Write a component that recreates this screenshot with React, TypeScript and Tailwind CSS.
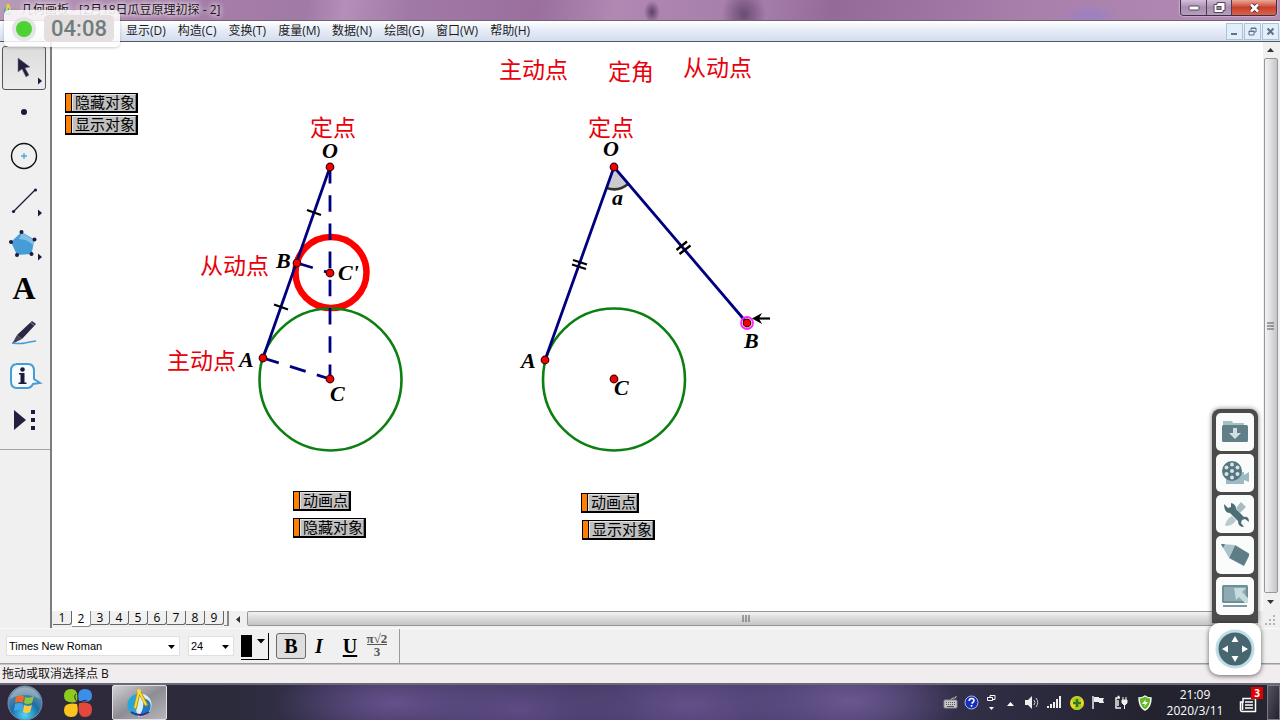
import { useState } from "react"
import { clsx } from "clsx"

const menus = ["显示(D)", "构造(C)", "变换(T)", "度量(M)", "数据(N)", "绘图(G)", "窗口(W)", "帮助(H)"]

const pages = [1, 2, 3, 4, 5, 6, 7, 8, 9]

const redLabels = [
    { text: "主动点", x: 499, y: 78 },
    { text: "定角", x: 608, y: 80 },
    { text: "从动点", x: 683, y: 76 },
    { text: "定点", x: 310, y: 136 },
    { text: "定点", x: 588, y: 136 },
    { text: "从动点", x: 200, y: 274 },
    { text: "主动点", x: 167, y: 369 },
]

const pointLabels = [
    { text: "O", x: 322, y: 158 },
    { text: "B", x: 276, y: 268 },
    { text: "C'", x: 338, y: 280 },
    { text: "A", x: 239, y: 367 },
    { text: "C", x: 330, y: 401 },
    { text: "O", x: 603, y: 156 },
    { text: "a", x: 612, y: 205 },
    { text: "A", x: 521, y: 368 },
    { text: "C", x: 614, y: 395 },
    { text: "B", x: 744, y: 348 },
]

const points = [
    [330, 167],
    [297, 263],
    [330, 273],
    [263, 358],
    [330, 379],
    [614, 167],
    [545, 360],
    [614, 379],
    [747, 323],
]

function WindowControls() {
    return (
        <div className="mr-[3px] flex h-4 overflow-hidden rounded-b-[4px] border border-t-0 border-[#3d2f45] shadow-[0_0_2px_#fff]">
            <button aria-label="最小化" className="flex w-[26px] items-center justify-center border-r border-[#4d3d55] bg-linear-to-b from-[#d3bfd6] via-[#a98db1] via-50% to-[#b79fbd]">
                <svg width="12" height="6" viewBox="0 0 12 6"><rect x="1" y="1" width="10" height="4" rx="1" fill="#fff" stroke="#54465c" /></svg>
            </button>
            <button aria-label="还原" className="flex w-[25px] items-center justify-center border-r border-[#4d3d55] bg-linear-to-b from-[#d3bfd6] via-[#a98db1] via-50% to-[#b79fbd]">
                <svg width="13" height="13" viewBox="0 0 13 13">
                    <path d="M4 1.500h8v8h-2v2h-9v-8h3z" fill="#fff" stroke="#54465c" />
                    <rect x="4" y="5.500" width="4" height="3" fill="#a98db1" stroke="#54465c" />
                </svg>
            </button>
            <button aria-label="关闭" className="flex w-[44px] items-center justify-center bg-linear-to-b from-[#e9a798] via-[#c8402c] via-50% to-[#d9634a]">
                <svg width="13" height="12" viewBox="0 0 13 12">
                    <path d="M3 2.500l7 7M10 2.500l-7 7" stroke="#5b2b2b" strokeWidth="4.500" />
                    <path d="M3 2.500l7 7M10 2.500l-7 7" stroke="#fff" strokeWidth="2.600" />
                </svg>
            </button>
        </div>
    )
}

function TitleBar() {
    return (
        <div className="flex h-5 shrink-0 items-start justify-between overflow-hidden bg-[radial-gradient(ellipse_10px_14px_at_652px_12px,#5d4166,transparent_80%),radial-gradient(ellipse_26px_30px_at_744px_14px,#694b73,transparent_85%),radial-gradient(ellipse_30px_12px_at_1090px_16px,#9a80c4,transparent),linear-gradient(100deg,#b79ab8_0%,#a57da8_16%,#a27aa6_24%,#b48fb8_27%,#a179a6_32%,#9a6f9e_42%,#b088b2_48%,#a47ca9_60%,#936a98_65%,#a87fab_80%,#b48cb5_100%)]">
            <div className="flex h-5 items-center gap-2 pl-1">
                <svg width="9" height="14" viewBox="0 0 9 14">
                    <circle cx="4" cy="8" r="4" fill="#3c9fd4" />
                    <path d="M4 1l4 10M4 1L2 10" stroke="#e8d23a" strokeWidth="2" fill="none" />
                    <path d="M1 10q3 3 7 0" stroke="#1d4b7d" fill="none" />
                </svg>
                <span className="text-[12px] leading-4 whitespace-nowrap text-[#1c1420] [text-shadow:0_0_6px_#fff,0_0_4px_#fff]">几何画板 - [2月18日瓜豆原理初探 - 2]</span>
            </div>
            <WindowControls />
        </div>
    )
}

function MenuBar() {
    return (
        <nav className="flex h-[22px] shrink-0 items-center border-t border-b border-t-[#6f6273] border-b-[#55585f] bg-linear-to-b from-white via-[#e9eef8] via-40% to-[#d3ddee] pl-[126px]">
            <div className="flex flex-1 gap-3">
                {menus.map((m) => (
                    <button key={m} className="text-[12px] leading-4 whitespace-nowrap text-[#1b1b1b]">{m}</button>
                ))}
            </div>
            <div className="flex gap-px pr-px">
                <button aria-label="最小化文档" className="flex size-[17px] items-center justify-center border border-[#a9c3dc] bg-[#e3eefb]">
                    <svg width="9" height="9" viewBox="0 0 9 9"><path d="M1 7h6" stroke="#5e7388" strokeWidth="2" /></svg>
                </button>
                <button aria-label="还原文档" className="flex size-[17px] items-center justify-center border border-[#a9c3dc] bg-[#e3eefb]">
                    <svg width="9" height="9" viewBox="0 0 9 9" fill="none" stroke="#5e7388">
                        <path d="M3 3V1h5v4H6M3 1.500h5" />
                        <path d="M1 4h5v4H1zM1 4.500h5" />
                    </svg>
                </button>
                <button aria-label="关闭文档" className="flex size-[17px] items-center justify-center border border-[#a9c3dc] bg-[#e3eefb]">
                    <svg width="9" height="9" viewBox="0 0 9 9"><path d="M1.500 1.500l6 6M7.500 1.500l-6 6" stroke="#5e7388" strokeWidth="2" /></svg>
                </button>
            </div>
        </nav>
    )
}

// every tool is drawn on a 44x44 field, the small triangle marks a fly-out
const tools = [
    {
        name: "移动箭头工具",
        flyout: true,
        icon: <path d="M15 11v14l4-3 4 8 3-2-4-7 5-1z" fill="#231f3e" stroke="#77758a" strokeWidth="0.500" />,
    },
    { name: "点工具", flyout: false, icon: <circle cx="21" cy="21" r="3" fill="#1d1a3b" /> },
    {
        name: "圆工具",
        flyout: false,
        icon: (
            <>
                <circle cx="21" cy="21" r="12.500" fill="none" stroke="#111" strokeWidth="1.400" />
                <path d="M18 21h6M21 18v6" stroke="#4ea6d8" strokeWidth="1.300" />
            </>
        ),
    },
    {
        name: "线段直尺工具",
        flyout: true,
        icon: (
            <>
                <path d="M10 33L32 11" stroke="#1d1a3b" strokeWidth="1.300" />
                <circle cx="10.500" cy="32.500" r="1.600" fill="#1d1a3b" />
                <circle cx="32.500" cy="11" r="1.600" fill="#1d1a3b" />
            </>
        ),
    },
    {
        name: "多边形工具",
        flyout: true,
        icon: (
            <>
                <path d="M18.500 9l13 7.500-3 14.500-14.500 1L8 19z" fill="#469dd6" />
                <path d="M19 10l12 7-1 5q-6-6-14-6z" fill="#a9d5f0" opacity="0.600" />
                {[[18.5, 9], [31.5, 16.5], [28.500, 31], [14, 32], [8, 19]].map(([x, y]) => (
                    <circle key={x} cx={x} cy={y} r="2" fill="#1d1a3b" />
                ))}
            </>
        ),
    },
    { name: "文本工具", flyout: false, icon: null },
    {
        name: "标记工具",
        flyout: false,
        icon: (
            <>
                <path d="M29 10l4 3-14 15-5-4z" fill="#2b2744" />
                <path d="M14 24l5 4-10 5z" fill="#444158" />
                <path d="M27 11l5 4" stroke="#9a98ab" />
                <path d="M9 32q9 1 13 0t11-2" stroke="#469dd6" strokeWidth="1.400" fill="none" />
            </>
        ),
    },
    {
        name: "信息工具",
        flyout: false,
        icon: (
            <>
                <path d="M13 9h12q6 0 6 7v8l6 4-7 1q-2 4-6 4H14q-6 0-6-7V16q0-7 6-7z" fill="#f7fbfe" stroke="#469dd6" strokeWidth="2" />
                <circle cx="19.500" cy="14.500" r="2.300" fill="#1d1a3b" />
                <path d="M16 18h5.500v9.500h2V29h-8v-1.500h2v-8H16z" fill="#1d1a3b" />
            </>
        ),
    },
    {
        name: "自定义工具",
        flyout: false,
        icon: (
            <>
                <path d="M11 11l12 10-12 10z" fill="#231f3e" />
                <path d="M28 11h4v4h-4zM28 19h4v4h-4zM28 27h4v4h-4z" fill="#1d1a3b" />
            </>
        ),
    },
]

function ToolBox() {
    const [active, setActive] = useState(0)
    return (
        <aside className="flex w-[52px] shrink-0 flex-col border-r-2 border-[#7d7d7d] bg-[#f0f0f0]">
            <div className="flex flex-col border-b border-[#a6a6a6] pt-1 pb-[7px] pl-0.5">
                {tools.map((tool, i) => (
                    <button
                        key={tool.name}
                        aria-label={tool.name}
                        onClick={() => setActive(i)}
                        className={clsx(
                            "flex h-11 w-11 items-start rounded-[3px] border",
                            i === active ? "border-[#555] bg-linear-to-b from-[#dcdcdc] to-[#ececec]" : "border-transparent"
                        )}
                    >
                        {tool.icon ? (
                            <svg width="42" height="42" viewBox="0 0 42 42">
                                {tool.icon}
                                {tool.flyout && <path d="M35 30.500l4 3.500-4 3.500z" fill="#1d1a3b" />}
                            </svg>
                        ) : (
                            <span className="w-[42px] text-center font-['Liberation_Serif',serif] text-[32px] leading-[42px] font-bold text-black">A</span>
                        )}
                    </button>
                ))}
            </div>
        </aside>
    )
}

function ActionButton({ label, className }: { label: string; className: string }) {
    return (
        <button className={clsx("absolute flex h-5 border border-r-2 border-b-2 border-black bg-[#c0c0c0] text-[15px] leading-4 whitespace-nowrap text-black", className)}>
            <span className="h-full w-[6px] border-r border-black bg-[#ff8000]" />
            <span className="h-full border-t border-l border-r border-t-[#e4e4e4] border-r-[#808080] border-l-[#e4e4e4] pl-[2px] leading-[15px]">{label}</span>
        </button>
    )
}

function Sketch() {
    return (
        <div className="relative min-w-0 flex-1 overflow-hidden bg-white">
            <svg className="absolute inset-0 h-full w-full">
                <g transform="translate(-52 -42)" fill="none">
                    <circle cx="331" cy="272.500" r="35.500" stroke="#ff0000" strokeWidth="6.500" />
                    <circle cx="330.500" cy="379.500" r="71" stroke="#0b7f10" strokeWidth="2.600" />
                    <circle cx="614" cy="379.500" r="71" stroke="#0b7f10" strokeWidth="2.600" />

                    <g stroke="#00007f" strokeWidth="2.800">
                        <path d="M330 167V379M263 358L330 379M297 263L330 273" strokeDasharray="16.500 11.700" />
                        <path d="M330 167L263 358" />
                    </g>

                    {/* angle mark at O */}
                    <path d="M614 167L606.600 188A22 22 0 0 0 628.300 183.700Z" fill="#cbcbd0" />
                    <path d="M606.600 188A22 22 0 0 0 628.300 183.700" stroke="#333" strokeWidth="2.500" />
                    <path d="M545 360L614 167L747 323" stroke="#00007f" strokeWidth="2.800" />

                    {/* equal length ticks */}
                    <path d="M307 210l14 5M274 304.500l14 5M573 260l14 4.500M572 264.500l14 4.500M676.500 250l10.500-8.500M679.500 254l11-8.500" stroke="#000" strokeWidth="2.300" />

                    <circle cx="747" cy="323" r="6" stroke="#ff22ff" strokeWidth="1.800" />
                    {points.map(([x, y]) => (
                        <circle key={`${x}-${y}`} cx={x} cy={y} r="3.800" fill="#f00000" stroke="#400000" strokeWidth="1.200" />
                    ))}
                    <path d="M755 318.500h15" stroke="#000" strokeWidth="2.200" />
                    <path d="M752 318.500l10-5.500-3 5.500 3 5.500z" fill="#000" />

                    <g fill="#e8000b" fontSize="23" fontFamily="'Noto Sans CJK SC', sans-serif">
                        {redLabels.map((l) => (
                            <text key={`${l.x}-${l.y}`} x={l.x} y={l.y}>{l.text}</text>
                        ))}
                    </g>
                    <g fill="#000" fontSize="22" fontWeight="700" fontStyle="italic" fontFamily="'Liberation Serif', serif">
                        {pointLabels.map((l) => (
                            <text key={`${l.x}-${l.y}`} x={l.x} y={l.y}>{l.text}</text>
                        ))}
                    </g>
                </g>
            </svg>
            <ActionButton label="隐藏对象" className="top-[51px] left-[13px]" />
            <ActionButton label="显示对象" className="top-[73px] left-[13px]" />
            <ActionButton label="动画点" className="top-[449px] left-[241px]" />
            <ActionButton label="隐藏对象" className="top-[476px] left-[241px]" />
            <ActionButton label="动画点" className="top-[451px] left-[529px]" />
            <ActionButton label="显示对象" className="top-[478px] left-[530px]" />
        </div>
    )
}

function VerticalScroll() {
    return (
        <div className="flex w-[17px] shrink-0 flex-col items-center bg-[#f0f0f0] pr-0.5">
            <button aria-label="向上滚动" className="flex h-4 w-full items-center justify-center">
                <svg width="7" height="4" viewBox="0 0 7 4"><path d="M0 4l3.500-4L7 4z" fill="#333" /></svg>
            </button>
            <div className="flex w-[14px] flex-1 items-center justify-center rounded-[2px] border border-[#979797] bg-linear-to-r from-[#f3f3f3] via-[#dedee0] to-[#c4c5c9]">
                <svg width="7" height="8" viewBox="0 0 7 8"><path d="M0 1h7M0 4h7M0 7h7" stroke="#555" /></svg>
            </div>
            <button aria-label="向下滚动" className="flex h-[18px] w-full items-center justify-center">
                <svg width="7" height="4" viewBox="0 0 7 4"><path d="M0 0l3.500 4L7 0z" fill="#333" /></svg>
            </button>
        </div>
    )
}

function PageTabs() {
    const [page, setPage] = useState(2)
    return (
        <div className="flex h-[17px] shrink-0 items-start bg-[#f0f0f0]">
            <div className="flex h-full pl-px">
                {pages.map((p) => (
                    <button
                        key={p}
                        onClick={() => setPage(p)}
                        className={clsx(
                            "w-[19px] rounded-br-[3px] border-r border-b text-center text-[12px] text-black",
                            p === page ? "h-4 border-[#8c8c8c] bg-white leading-4" : "h-[14px] border-[#666] leading-[14px]"
                        )}
                    >
                        {p}
                    </button>
                ))}
                <span className="h-[15px] w-[5px] border-r-2 border-b border-[#888]" />
            </div>
            <button aria-label="向左滚动" className="flex h-full w-[18px] items-center justify-center">
                <svg width="4" height="7" viewBox="0 0 4 7"><path d="M4 0L0 3.500 4 7z" fill="#333" /></svg>
            </button>
            <div className="flex h-[15px] flex-1 items-center justify-center rounded-[2px] border border-[#979797] bg-linear-to-b from-[#f3f3f3] via-[#dadadb] to-[#c4c5c9]">
                <svg width="8" height="7" viewBox="0 0 8 7"><path d="M1 0v7M4 0v7M7 0v7" stroke="#555" /></svg>
            </div>
            <button aria-label="向右滚动" className="flex h-full w-4 items-center justify-center">
                <svg width="4" height="7" viewBox="0 0 4 7"><path d="M0 0l4 3.500L0 7z" fill="#333" /></svg>
            </button>
            <svg className="mt-1 mr-1 ml-1" width="12" height="12" viewBox="0 0 12 12">
                <path d="M9 1h2M9 5h2M5 5h2M9 9h2M5 9h2M1 9h2" stroke="#b5b5b5" strokeWidth="2" />
            </svg>
        </div>
    )
}

function Combo({ label, value, className }: { label: string; value: string; className: string }) {
    return (
        <label aria-label={label} className={clsx("relative flex h-5 border border-[#e0e0e0] bg-white", className)}>
            <select aria-label={label} defaultValue={value} className="h-full w-full appearance-none pl-[2px] font-['Liberation_Sans',sans-serif] text-[11px] leading-[18px] text-black">
                <option>{value}</option>
            </select>
            <svg className="pointer-events-none absolute top-2 right-1" width="7" height="4" viewBox="0 0 7 4"><path d="M0 0l3.500 4L7 0z" fill="#000" /></svg>
        </label>
    )
}

function TextToolbar() {
    return (
        <div className="flex h-9 shrink-0 items-center border-t border-b border-t-[#fafafa] border-b-[#9c9c9c] bg-[#f0f0f0] pl-[6px]">
            <Combo label="字体" value="Times New Roman" className="w-[174px]" />
            <Combo label="字号" value="24" className="ml-2 w-[46px]" />
            <button aria-label="颜色" className="ml-[7px] flex h-[27px] w-7 border-r border-b border-black">
                <span className="mt-0.5 h-[22px] w-[11px] bg-black" />
                <svg className="mt-1.5 ml-[5px]" width="8" height="5" viewBox="0 0 8 5"><path d="M0 0l4 4.500L8 0z" fill="#000" /></svg>
            </button>
            <button aria-pressed className="ml-[7px] h-[26px] w-[30px] rounded-[3px] border border-[#6a6a6a] bg-[#dedede] font-['Liberation_Serif',serif] text-[20px] leading-6 font-bold text-black">B</button>
            <button className="w-[26px] font-['Liberation_Serif',serif] text-[20px] leading-6 font-bold text-black italic">I</button>
            <button className="ml-[5px] w-[26px] font-['Liberation_Serif',serif] text-[20px] leading-6 font-bold text-black underline underline-offset-2">U</button>
            <button aria-label="数学符号" className="ml-px flex h-[27px] w-[26px] flex-col items-center font-['Liberation_Serif',serif] text-[13px] font-bold text-[#555]">
                <span className="h-3 border-b border-[#555] leading-3">π√2</span>
                <span className="leading-[13px]">3</span>
            </button>
            <span className="ml-[9px] h-full border-l border-[#9a9a9a]" />
        </div>
    )
}

function StatusBar() {
    return (
        <div className="flex h-[19px] shrink-0 items-center border-t border-[#c5c5c5] bg-[#f1edee] pl-[2px] text-[12px] whitespace-nowrap text-[#111]">
            拖动或取消选择点 B
        </div>
    )
}

function StartOrb() {
    return (
        <svg width="36" height="36" viewBox="0 0 36 36">
            <defs>
                <radialGradient id="orb" cx="50%" cy="85%" r="80%">
                    <stop offset="0" stopColor="#4fd8fb" />
                    <stop offset="0.5" stopColor="#1c6ea8" />
                    <stop offset="1" stopColor="#7d95a8" />
                </radialGradient>
            </defs>
            <circle cx="18" cy="18" r="17" fill="url(#orb)" stroke="#6d93ab" />
            <path d="M9 12q4-3 8-1l-1 7q-4-2-8 0z" fill="#ee6a2c" />
            <path d="M18 12q4 2 9-1l-2 7q-4 2-8 0z" fill="#8fc63d" />
            <path d="M8 19q4-2 8 0l-1 7q-4-2-8 0z" fill="#43a5e6" />
            <path d="M17 20q4 2 8 0l-2 7q-4 2-7 0z" fill="#fccb3a" />
            <path d="M3 14a15.500 15.500 0 0 1 30 0q-15-8-30 0z" fill="#fff" opacity="0.250" />
        </svg>
    )
}

function TaskBar() {
    return (
        <footer className="flex h-[37px] shrink-0 items-stretch border-t-2 border-[#6c6878] bg-[radial-gradient(ellipse_120px_40px_at_395px_18px,#65518c,transparent),radial-gradient(ellipse_110px_44px_at_520px_24px,#5e4b84,transparent),radial-gradient(ellipse_130px_44px_at_690px_20px,#635089,transparent),radial-gradient(ellipse_110px_44px_at_850px_16px,#6a578f,transparent),linear-gradient(90deg,#30283c_0%,#2b2b3b_18%,#3c3459_30%,#483c6c_65%,#33304a_74%,#23232f_90%,#262630_100%)]">
            <button aria-label="开始" className="flex w-[50px] items-center justify-center"><StartOrb /></button>
            <button aria-label="浏览器" className="flex w-14 items-center justify-center">
                <svg width="30" height="30" viewBox="0 0 30 30">
                    <path d="M14 14Q1 16 1 8q0-7 7-7 8 0 6 13z" fill="#8ecb1f" />
                    <path d="M16 13Q13 1 22 1q7 0 7 7 0 8-13 5z" fill="#3c8fe8" />
                    <path d="M14 16Q17 29 8 29q-7 0-7-7 0-8 13-6z" fill="#fbc51d" />
                    <path d="M16 15q13-2 13 6 0 8-7 8-8 0-6-14z" fill="#e2493c" />
                    <path d="M14 14q-4-6-1-8M16 15q6-4 8-2" stroke="#2a2138" fill="none" />
                </svg>
            </button>
            <button aria-label="几何画板" className="ml-[6px] flex w-[55px] items-center justify-center rounded-[2px] border border-[#e0e0e4] bg-linear-to-br from-[#d2d2d6] via-[#8e8d94] via-50% to-[#b7b6bc]">
                <svg width="28" height="30" viewBox="0 0 28 30">
                    <circle cx="14" cy="17" r="11.500" fill="#d9effa" />
                    <path d="M14 5.500A11.500 11.500 0 0 0 12 28.500Q7 17 14 5.500z" fill="#22a6dc" />
                    <path d="M17 10q10 2 7 12-4 7-11 6 6-8 4-18z" fill="#1a78c4" />
                    <path d="M5 24q9 6 18 0" stroke="#4a2a7a" fill="none" strokeWidth="2" />
                    <path d="M13 3L9 21M13 3l8 15" stroke="#b98e12" strokeWidth="3.500" />
                    <path d="M13 3L9 20M13 3l7 14" stroke="#f7dc3a" strokeWidth="2" />
                    <circle cx="13" cy="3" r="2" fill="#f7dc3a" />
                </svg>
            </button>
            <div className="ml-auto flex items-center gap-[6px]">
                <svg width="15" height="15" viewBox="0 0 15 15">
                    <path d="M8 5q0-2 3-2t2-2" stroke="#bbb" fill="none" />
                    <rect x="1" y="5" width="13" height="8" rx="1" fill="#c9c9cc" stroke="#8a8a90" />
                    <path d="M3 7.500h9M3 9.500h9" stroke="#555" strokeDasharray="1 1" />
                    <path d="M4 11.500h7" stroke="#555" />
                </svg>
                <svg width="15" height="16" viewBox="0 0 15 16">
                    <circle cx="7.500" cy="7.500" r="6.500" fill="#1631b8" stroke="#a6b7ee" />
                    <path d="M5.200 6q0-2.500 2.400-2.500T10 5.600Q10 7 7.600 8.500M7.600 10v1.800" stroke="#fff" strokeWidth="1.600" fill="none" />
                </svg>
                <svg width="13" height="18" viewBox="0 0 13 18" fill="none" stroke="#fff">
                    <path d="M5 3.500v-2h5v4H8M2.500 3.500h5v3h-5z" />
                    <path d="M4 13h5l-2.500 3z" fill="#fff" stroke="none" />
                </svg>
                <svg width="13" height="8" viewBox="0 0 13 8"><path d="M3 7l3.500-4L10 7z" fill="#fff" /></svg>
                <svg className="ml-px" width="16" height="15" viewBox="0 0 16 15">
                    <path d="M1 5h3l4-4v13l-4-4H1z" fill="#eee" />
                    <path d="M10 5q2 2.500 0 5M12 3q3.500 4.500 0 9" stroke="#ccc" fill="none" />
                </svg>
                <svg className="ml-px" width="15" height="15" viewBox="0 0 15 15"><path d="M1 13v-2M4 13V9M7 13V7M10 13V4M13 13V1" stroke="#eee" strokeWidth="2" /></svg>
                <svg className="ml-px" width="16" height="16" viewBox="0 0 16 16">
                    <circle cx="8" cy="8" r="7" fill="#f7d51e" />
                    <path d="M2 5q5-6 11-1L8 8zM14 11q-4 6-10 3l4-6z" fill="#a9cc2d" />
                    <path d="M8 4v8M4 8h8" stroke="#2d7a1e" strokeWidth="2.600" />
                </svg>
                <svg width="16" height="15" viewBox="0 0 16 15"><path d="M2 1v13" stroke="#eee" strokeWidth="1.500" /><path d="M3 2h5v1h5l-1 2 1 3H8V7H3z" fill="#eee" /></svg>
                <svg width="16" height="16" viewBox="0 0 16 16" fill="none" stroke="#eee">
                    <path d="M7 3H3v10h5M4.500 1.500h2M5 5v6" strokeWidth="1.500" />
                    <path d="M9 5h5v3l-2 2h-1L9 8zM10 2v3M13 2v3M11.500 10v4" fill="#eee" />
                </svg>
                <svg className="ml-0.5" width="16" height="16" viewBox="0 0 16 16">
                    <path d="M8 1q3 2 6 2 0 9-6 12-6-3-6-12 3 0 6-2z" fill="#64b52b" stroke="#f2f7ee" strokeWidth="1.500" />
                    <path d="M9 4L5 9h3l-1 3 4-5H8z" fill="#fff" />
                </svg>
            </div>
            <div className="ml-[11px] flex w-[62px] flex-col items-center justify-center text-[12px] leading-4 text-white">
                <time>21:09</time>
                <time>2020/3/11</time>
            </div>
            <button aria-label="通知" className="relative ml-[11px] flex w-[30px] items-center pt-1 pl-0.5">
                <svg width="18" height="18" viewBox="0 0 18 18" fill="none" stroke="#fff">
                    <path d="M4 2.500h12.500v13H3q-1.500 0-1.500-2V6H4z" strokeWidth="1.500" />
                    <path d="M6 6h8M6 9h8M6 12h8M3.500 6v8" strokeWidth="1.500" />
                </svg>
                <span className="absolute top-0.5 right-1 h-3 w-3 bg-[#e00000] text-center text-[10px] leading-3 font-bold text-white">3</span>
            </button>
            <button aria-label="显示桌面" className="w-[13px] border border-[#7b7986] bg-linear-to-br from-[#565463] to-[#23222c]" />
        </footer>
    )
}

function Recorder() {
    return (
        <div className="absolute top-[10px] left-1 flex h-[37px] w-[116px] items-center gap-2 rounded-[5px] bg-white/85 pl-2 shadow-[0_1px_3px_#0003]">
            <span className="flex size-6 items-center justify-center rounded-full bg-[#e4e4e4]"><span className="size-4 rounded-full bg-[#4ed133]" /></span>
            <span className="flex h-[27px] w-[70px] items-center justify-center rounded-[5px] bg-[#e6dfdf] font-['Roboto',sans-serif] text-[22px] leading-6 font-medium text-[#6f7d80]">04:08</span>
        </div>
    )
}

const dockItems = [
    {
        name: "保存",
        icon: (
            <>
                <path d="M2 3h9l1 2h11v4H2z" fill="#a5c0c7" />
                <rect x="1" y="7" width="26" height="17" rx="1.500" fill="#607f89" />
                <path d="M12 10h4v5h4l-6 6-6-6h4z" fill="#cfe0e4" />
            </>
        ),
    },
    {
        name: "录像",
        icon: (
            <>
                <path d="M5 13h18v3l5-3v10l-5-2v4H5z" fill="#9db9c1" />
                <circle cx="11" cy="12" r="10" fill="#56757f" />
                {[[11, 5.500], [16.500, 8.500], [16.500, 15], [11, 18.500], [5.500, 15], [5.500, 8.500], [11, 12]].map(([x, y]) => (
                    <circle key={`${x}-${y}`} cx={x} cy={y} r="2" fill="#d5e3e6" />
                ))}
            </>
        ),
    },
    {
        name: "工具",
        icon: (
            <>
                <path d="M20 2l5 5-6 6-4-5z" fill="#a5bcc3" />
                <path d="M11 16l4 4q-3 6-11 6 1-7 7-10z" fill="#b7cbd0" />
                <path d="M3 4l4 4 3-1 0-4q5 1 5 6l8 8q5-1 5 5l-4-3-3 1-1 3 3 4q-6 0-6-6l-8-8q-6 0-6-9z" fill="#4d6d77" />
            </>
        ),
    },
    {
        name: "画笔",
        icon: (
            <>
                <path d="M14 4l15 9-6 12L8 17z" fill="#5f7d87" />
                <path d="M0 3l14 1-6 13z" fill="#a9c3ca" />
                <path d="M0 3h4l-2 4z" fill="#5f7d87" />
            </>
        ),
    },
    {
        name: "屏幕",
        icon: (
            <>
                <rect x="1" y="3" width="26" height="18" rx="1.500" fill="#6f8e98" />
                <rect x="3" y="5" width="22" height="14" fill="#8eabb4" />
                <path d="M13 6h12l-4 4 6 6v5h-3l-6-6-3 3z" fill="#c7dade" />
                <path d="M2 24h24" stroke="#7d99a2" strokeWidth="2" />
            </>
        ),
    },
]

function Dock() {
    return (
        <div className="absolute right-[18px] bottom-[45px] flex w-[54px] flex-col items-center">
            <div className="flex flex-col gap-[3px] rounded-t-[8px] bg-[#4b4b4b] px-1 pt-1 pb-2 shadow-[0_0_5px_#0008]">
                {dockItems.map((item) => (
                    <button key={item.name} aria-label={item.name} className="flex size-[38px] items-center justify-center rounded-[5px] bg-[#fafbfb]">
                        <svg width="28" height="28" viewBox="0 0 28 28">{item.icon}</svg>
                    </button>
                ))}
            </div>
            <button aria-label="移动" className="flex h-[52px] w-[52px] items-center justify-center rounded-[10px] bg-white shadow-[0_1px_5px_#0009]">
                <svg width="40" height="40" viewBox="0 0 40 40">
                    <circle cx="20" cy="20" r="18" fill="#486670" stroke="#bfdde5" strokeWidth="3" />
                    <path d="M20 7l3.500 6h-7zM20 33l3.500-6h-7zM7 20l6-3.500v7zM33 20l-6-3.500v7z" fill="#fff" />
                </svg>
            </button>
        </div>
    )
}

export default function App() {
    return (
        <div className="relative flex h-screen flex-col overflow-hidden bg-[#f0f0f0] font-['Open_Sans','Noto_Sans_CJK_SC',sans-serif]">
            <TitleBar />
            <MenuBar />
            <div className="flex min-h-0 flex-1">
                <ToolBox />
                <div className="flex min-w-0 flex-1 flex-col">
                    <div className="flex min-h-0 flex-1">
                        <Sketch />
                        <VerticalScroll />
                    </div>
                    <PageTabs />
                </div>
            </div>
            <TextToolbar />
            <StatusBar />
            <TaskBar />
            <Recorder />
            <Dock />
        </div>
    )
}
